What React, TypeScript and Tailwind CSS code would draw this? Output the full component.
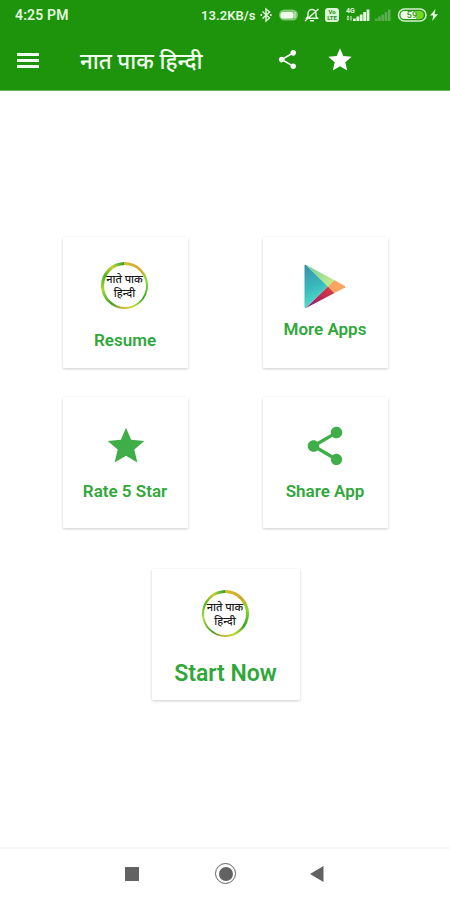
import React from "react";

const STAR = "M12 17.27L18.18 21l-1.64-7.03L22 9.24l-7.19-.61L12 2 9.19 8.63 2 9.24l5.46 4.73L5.82 21z";
const SHARE =
  "M18 16.08c-.76 0-1.44.3-1.96.77L8.91 12.7c.05-.23.09-.46.09-.7s-.04-.47-.09-.7l7.05-4.11c.54.5 1.25.81 2.04.81 1.66 0 3-1.34 3-3s-1.34-3-3-3-3 1.34-3 3c0 .24.04.47.09.7L8.04 9.81C7.5 9.31 6.79 9 6 9c-1.66 0-3 1.34-3 3s1.34 3 3 3c.79 0 1.5-.31 2.04-.81l7.12 4.16c-.05.21-.08.43-.08.65 0 1.61 1.31 2.92 2.92 2.92s2.92-1.31 2.92-2.92-1.31-2.92-2.92-2.92z";

function Icon({ d, className }: { d: string; className: string }) {
  return (
    <svg viewBox="0 0 24 24" fill="currentColor" className={`block shrink-0 ${className}`}>
      <path d={d} />
    </svg>
  );
}

function StatusBar() {
  return (
    <div className="flex h-[30px] items-center pl-[15px] text-[#e4f8df]">
      <span className="w-[186px] text-[14px] font-semibold leading-none tracking-[0.15px]">4:25 PM</span>
      <span className="w-[58px] whitespace-nowrap text-[13px] font-semibold leading-none tracking-[0.05px]">13.2KB/s</span>
      {/* bluetooth */}
      <svg viewBox="0 0 14 16" className="h-4 w-3.5 shrink-0" fill="none" stroke="currentColor" strokeWidth="1.4">
        <path d="M3.5 4.5l7 6.5L7 14V2l3.5 3-7 6.5" />
        <path d="M1.5 8h1.6M11 8h1.6" strokeWidth="1.8" />
      </svg>
      {/* bluetooth device battery */}
      <svg viewBox="0 0 22 14" className="ml-[5px] h-3.5 w-[22px] shrink-0">
        <rect x="1" y="1.5" width="19" height="11" rx="5.5" fill="#7cc873" />
        <rect x="2.5" y="4" width="13" height="6.5" rx="2.5" fill="#effceb" />
        <path d="M17 4v6" stroke="#bde5b6" strokeWidth="1.4" />
      </svg>
      {/* muted bell */}
      <svg viewBox="0 0 16 16" className="ml-1 h-4 w-4 shrink-0" fill="none" stroke="currentColor" strokeWidth="1.4">
        <path d="M2.5 11.3h11L12 9.3V6.5a4 4 0 0 0-8 0v2.8zM6 13.8h4M1 14L14.5 2" />
      </svg>
      <div className="ml-[5px] flex h-3.5 w-3.5 shrink-0 flex-col items-center justify-center rounded-[3px] bg-[#dcf5d7] text-[6px] font-bold leading-[6px] text-[#279317]">
        <span>Vo</span>
        <span>LTE</span>
      </div>
      <svg viewBox="0 0 25 16" className="ml-1.5 h-4 w-[25px] shrink-0" fill="currentColor">
        <text x="1" y="6" fontSize="7" fontWeight="700">4G</text>
        <path d="M1.5 10.5L3 8.5l1.5 2zM1.5 11.5L3 13.5l1.5-2zM5.5 9h1v4.5h-1zM8 11.5h2.8V14H8zM11.4 9.5h2.8V14h-2.8zM14.8 7.5h2.8V14h-2.8zM18.2 5h2.8v9h-2.8zM21.6 2.5h2.8V14h-2.8z" />
      </svg>
      <svg viewBox="0 0 17 16" className="ml-[5px] h-4 w-[17px] shrink-0" fill="#58b04d">
        <path d="M0 11.5h2.6V14H0zM3.2 9.5h2.6V14H3.2zM6.4 7.5H9V14H6.4zM9.6 5h2.6v9H9.6zM12.8 2.5h2.8V14h-2.8z" />
      </svg>
      <svg viewBox="0 0 30 16" className="ml-[5px] h-4 w-[30px] shrink-0">
        <rect x="1.5" y="2" width="27.5" height="12" rx="6" fill="none" stroke="#d2f1cc" strokeWidth="1.6" />
        <path d="M7.5 4h12v8h-12a4 4 0 0 1 0-8z" fill="#eefbea" />
        <path d="M19.5 4h3.2a4 4 0 0 1 0 8h-3.2z" fill="#71d824" />
        <text x="15" y="11.2" fontSize="9" fontWeight="700" textAnchor="middle" fill="#47a632">59</text>
      </svg>
      <svg viewBox="0 0 10 12" className="ml-[2px] h-3 w-2.5 shrink-0" fill="currentColor">
        <path d="M6.5 0L1 6.6h3.2L3.2 12 9 5.2H5.6z" />
      </svg>
    </div>
  );
}

function Logo() {
  return (
    <div className="mr-px flex h-[47px] w-[47px] items-center justify-center rounded-full bg-[conic-gradient(#cfc02b,#d3a72c_12%,#8bd92b_22%,#39a51e_34%,#b7dc2c_43%,#d0b338_51%,#3d9e20_60%,#a1dc2b_72%,#55b51d_82%,#c2d22b_91%,#259d32)]">
      <div className="flex h-[42px] w-[42px] flex-col items-center justify-center whitespace-nowrap rounded-full bg-white pt-0.5 text-[11px] font-medium leading-[14px] text-[#171717]">
        <span>नाते पाक</span>
        <span>हिन्दी</span>
      </div>
    </div>
  );
}

function PlayLogo() {
  return (
    <svg viewBox="0 0 42 45" className="block h-[45px] w-[42px]">
      <defs>
        <linearGradient id="play-blue" x1="0" y1="0" x2="0.25" y2="1">
          <stop stopColor="#398eaa" />
          <stop offset="0.55" stopColor="#37b9bb" />
          <stop offset="1" stopColor="#57dfcb" />
        </linearGradient>
        <linearGradient id="play-red" x1="1" y1="0" x2="0" y2="1">
          <stop stopColor="#df403f" />
          <stop offset="0.5" stopColor="#bd2853" />
          <stop offset="1" stopColor="#8b168c" />
        </linearGradient>
        <linearGradient id="play-green" x1="0" y1="0" x2="1" y2="1">
          <stop stopColor="#6ccf9b" />
          <stop offset="1" stopColor="#d1ef8b" />
        </linearGradient>
      </defs>
      <path d="M.5 1.5Q.5.5 1.8.8L24 22.5 2 44Q.5 44.5.5 43z" fill="url(#play-blue)" />
      <path d="M1.8.8L31 16.5 24 22.5z" fill="url(#play-green)" />
      <path d="M2 44l22-21.5 6.5 6.4z" fill="url(#play-red)" />
      <path d="M24 22.5l6.7-6.2 10.1 5.6q1.3.9 0 1.8L30.3 29z" fill="#f8a463" />
    </svg>
  );
}

function Card({ icon, label, className, labelClassName }: {
  icon: React.ReactNode;
  label: string;
  className: string;
  labelClassName: string;
}) {
  return (
    <button className={`flex flex-col items-center rounded-[1px] bg-white shadow-[0_1px_3px_rgba(0,0,0,0.2)] ${className}`}>
      {icon}
      <span className={`whitespace-nowrap font-semibold leading-5 text-[#31a73b] ${labelClassName}`}>{label}</span>
    </button>
  );
}

export default function App() {
  return (
    <div className="flex h-[900px] w-[450px] flex-col overflow-hidden bg-white font-[Roboto,'Noto_Sans_Devanagari','Noto_Sans',sans-serif]">
      <header className="h-[91px] shrink-0 border-b border-[#66b95b] bg-[#1e940c]">
        <StatusBar />
        <div className="flex h-[60px] items-center pl-[17px] text-[#f1fff0]">
          <button className="flex w-[22px] flex-col gap-[3px]">
            <span className="h-[3px] w-full bg-current" />
            <span className="h-[3px] w-full bg-current" />
            <span className="h-[3px] w-full bg-current" />
          </button>
          <h1 className="ml-[41px] w-[196px] whitespace-nowrap pt-0.5 text-[22.3px] font-medium leading-8">नात पाक हिन्दी</h1>
          <Icon d={SHARE} className="mb-0.5 h-[23px] w-[23px] text-white" />
          <Icon d={STAR} className="ml-[27px] h-7 w-7 text-white" />
        </div>
      </header>

      <main className="flex flex-1 flex-col items-center pt-[146px]">
        <div className="grid grid-cols-2 gap-x-[75px] gap-y-[29px]">
          <Card icon={<Logo />} label="Resume" className="h-[131px] w-[125px] pt-[25px]" labelClassName="mt-[21px] text-[17px]" />
          <Card icon={<PlayLogo />} label="More Apps" className="h-[131px] w-[125px] pt-[27px]" labelClassName="mt-2.5 text-[17px]" />
          <Card icon={<Icon d={STAR} className="ml-px h-11 w-11" />} label="Rate 5 Star" className="h-[131px] w-[125px] pt-[27px] text-[#3fae49]" labelClassName="mt-[13px] text-[17px]" />
          <Card icon={<Icon d={SHARE} className="h-[46px] w-[46px]" />} label="Share App" className="h-[131px] w-[125px] pt-[26px] text-[#3fae49]" labelClassName="mt-3 text-[17px]" />
        </div>
        <Card icon={<Logo />} label="Start Now" className="ml-px mt-[41px] h-[131px] w-[148px] pt-[21px]" labelClassName="mt-[27px] text-[23px]" />
      </main>

      <nav className="flex h-[53px] shrink-0 items-center border-t-2 border-[#f6f6f6] pb-0.5 pl-[125px] text-[#626262]">
        <span className="h-3.5 w-3.5 bg-current" />
        <span className="ml-[76px] flex h-[21px] w-[21px] items-center justify-center rounded-full border-[1.5px] border-current">
          <span className="h-[14px] w-[14px] rounded-full bg-current" />
        </span>
        <svg viewBox="0 0 14 16" className="ml-[74px] h-4 w-3.5" fill="currentColor">
          <path d="M0 8L13.5 0v16z" />
        </svg>
      </nav>
    </div>
  );
}
